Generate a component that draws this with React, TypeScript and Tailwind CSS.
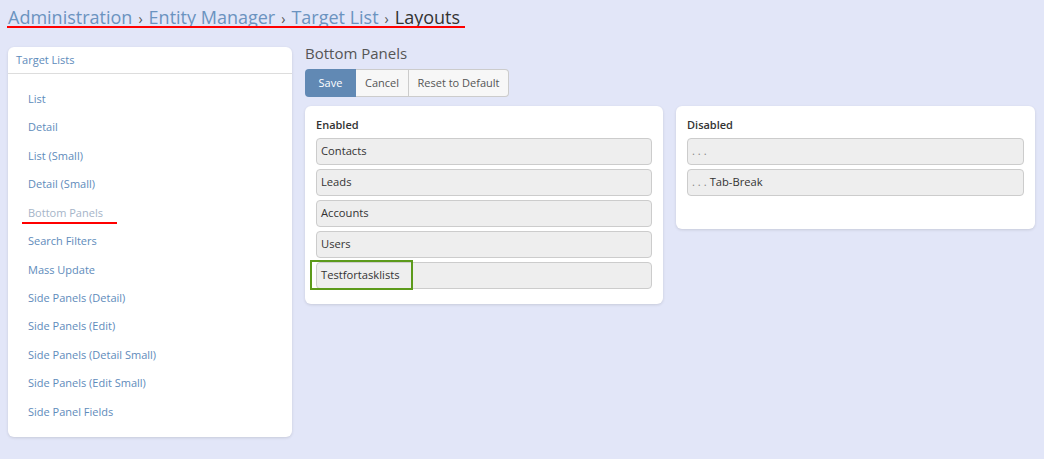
import React from "react";

const items = [
  "List",
  "Detail",
  "List (Small)",
  "Detail (Small)",
  "Bottom Panels",
  "Search Filters",
  "Mass Update",
  "Side Panels (Detail)",
  "Side Panels (Edit)",
  "Side Panels (Detail Small)",
  "Side Panels (Edit Small)",
  "Side Panel Fields",
];

function Row({ children, highlight }: { children: React.ReactNode; highlight?: boolean }) {
  return (
    <div className="relative h-[27px] rounded-[4px] border border-[#cccccc] bg-[#eeeeee] flex items-center px-[4px] text-[11.2px] text-[#333333]">
      {children}
      {highlight && (
        <div className="absolute left-[-7px] top-[-3px] w-[103px] h-[30px] border-2 border-[#5c9a1b]" />
      )}
    </div>
  );
}

export default function App() {
  return (
    <div
      className="w-[1044px] h-[459px] bg-[#e2e6f8] overflow-hidden"
      style={{ fontFamily: '"Open Sans", "Liberation Sans", sans-serif' }}
    >
      <div className="px-[8px] pt-[4px] h-[47px]">
        <div className="inline-block relative text-[18px] leading-[26px]">
          <span className="text-[#6b93c0]">Administration</span>
          <span className="text-[#555] mx-[6px] text-[14px]">›</span>
          <span className="text-[#6b93c0]">Entity Manager</span>
          <span className="text-[#555] mx-[6px] text-[14px]">›</span>
          <span className="text-[#6b93c0]">Target List</span>
          <span className="text-[#555] mx-[6px] text-[14px]">›</span>
          <span className="text-[#333]">Layouts</span>
          <div className="absolute left-[-1px] right-[-5px] top-[22px] h-[2px] bg-[#ff0000]" />
        </div>
      </div>
      <div className="flex px-[8px] gap-[13px] items-start">
        <div className="w-[284px] bg-white rounded-[6px] shadow-[0_1px_3px_rgba(0,0,0,0.12)]">
          <div className="h-[27px] border-b border-[#dddddd] flex items-center px-[8px] text-[11px] text-[#5e8bbb]">
            Target Lists
          </div>
          <div className="pt-[11px] pb-[11px]">
            {items.map((it) => (
              <div key={it} className="h-[28.45px] flex items-center px-[20px] text-[11px]">
                {it === "Bottom Panels" ? (
                  <span className="relative text-[#a5b4c8]">
                    {it}
                    <span className="absolute left-[-6px] right-[-14px] top-[17px] h-[2px] bg-[#ff0000]" />
                  </span>
                ) : (
                  <span className="text-[#5e8bbb]">{it}</span>
                )}
              </div>
            ))}
          </div>
        </div>
        <div className="flex-1">
          <div className="text-[15px] text-[#555555] leading-[20px] mt-[-4px]">Bottom Panels</div>
          <div className="flex mt-[6px] h-[28px] text-[11px]">
            <div className="w-[51px] bg-[#6189b4] text-white rounded-l-[4px] flex items-center justify-center">Save</div>
            <div className="w-[53px] bg-[#f7f7f7] text-[#555] border border-[#cccccc] border-l-0 flex items-center justify-center">Cancel</div>
            <div className="w-[100px] bg-[#f7f7f7] text-[#555] border border-[#cccccc] border-l-0 rounded-r-[4px] flex items-center justify-center">Reset to Default</div>
          </div>
          <div className="flex gap-[13px] mt-[9px] items-start">
            <div className="w-[358px] bg-white rounded-[6px] shadow-[0_1px_3px_rgba(0,0,0,0.12)] px-[11px] pt-[12px] pb-[15px]">
              <div className="text-[11px] font-semibold text-[#333] leading-[14px] mb-[6px]">Enabled</div>
              <div className="flex flex-col gap-[4px]">
                <Row>Contacts</Row>
                <Row>Leads</Row>
                <Row>Accounts</Row>
                <Row>Users</Row>
                <Row highlight>Testfortasklists</Row>
              </div>
            </div>
            <div className="w-[359px] bg-white rounded-[6px] shadow-[0_1px_3px_rgba(0,0,0,0.12)] px-[11px] pt-[12px] pb-[33px]">
              <div className="text-[11px] font-semibold text-[#333] leading-[14px] mb-[6px]">Disabled</div>
              <div className="flex flex-col gap-[4px]">
                <Row><span className="text-[#888]">. . .</span></Row>
                <Row><span className="text-[#888] mr-[3px]">. . .</span>Tab-Break</Row>
              </div>
            </div>
          </div>
        </div>
      </div>
    </div>
  );
}
